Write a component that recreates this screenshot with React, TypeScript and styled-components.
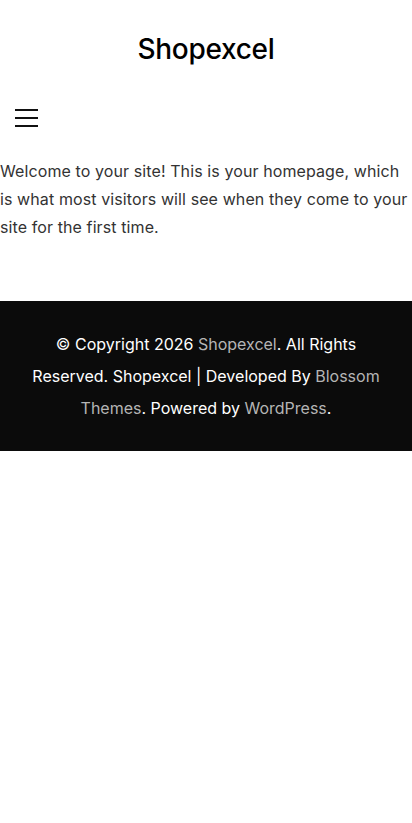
import styled, { createGlobalStyle } from "styled-components";

const GlobalStyle = createGlobalStyle`
    * { box-sizing: border-box; }
    body {
        margin: 0;
        background: #fff;
        font-family: Inter, "Noto Sans", sans-serif;
        color: #333;
    }
`;

const Header = styled.header`
    padding-top: 32px;
`;

const SiteTitle = styled.h1`
    margin: 0;
    text-align: center;
    font-size: 28px;
    line-height: 34px;
    font-weight: 500;
    letter-spacing: -0.3px;
    color: #000;
`;

const MenuBar = styled.div`
    display: flex;
    align-items: center;
    height: 40px;
    margin-top: 32px;
    padding-left: 15px;
`;

const MenuButton = styled.button`
    display: flex;
    flex-direction: column;
    justify-content: space-between;
    width: 23px;
    height: 18px;
    padding: 0;
    border: none;
    background: none;
    cursor: pointer;
    span {
        display: block;
        height: 2px;
        background: #111;
    }
`;

const Content = styled.main`
    padding: 19px 0 60px;
    p {
        margin: 0;
        font-size: 16px;
        line-height: 28px;
        letter-spacing: 0.1px;
        color: #333;
    }
`;

const Footer = styled.footer`
    background: #0b0b0b;
    padding: 27px 20px;
    text-align: center;
    p {
        margin: 0;
        font-size: 16px;
        line-height: 32px;
        color: #fff;
    }
`;

const FooterLink = styled.a`
    color: #b5b5b5;
    text-decoration: none;
`;

export default function App() {
    return (
        <>
            <GlobalStyle />
            <Header>
                <SiteTitle>Shopexcel</SiteTitle>
                <MenuBar>
                    <MenuButton aria-label="Menu">
                        <span />
                        <span />
                        <span />
                    </MenuButton>
                </MenuBar>
            </Header>
            <Content>
                <p>
                    Welcome to your site! This is your homepage, which is what most visitors will see when they come to your site for the first time.
                </p>
            </Content>
            <Footer>
                <p>
                    © Copyright 2026 <FooterLink href="#">Shopexcel</FooterLink>. All Rights Reserved. Shopexcel | Developed By{" "}
                    <FooterLink href="#">Blossom Themes</FooterLink>. Powered by <FooterLink href="#">WordPress</FooterLink>.
                </p>
            </Footer>
        </>
    );
}
